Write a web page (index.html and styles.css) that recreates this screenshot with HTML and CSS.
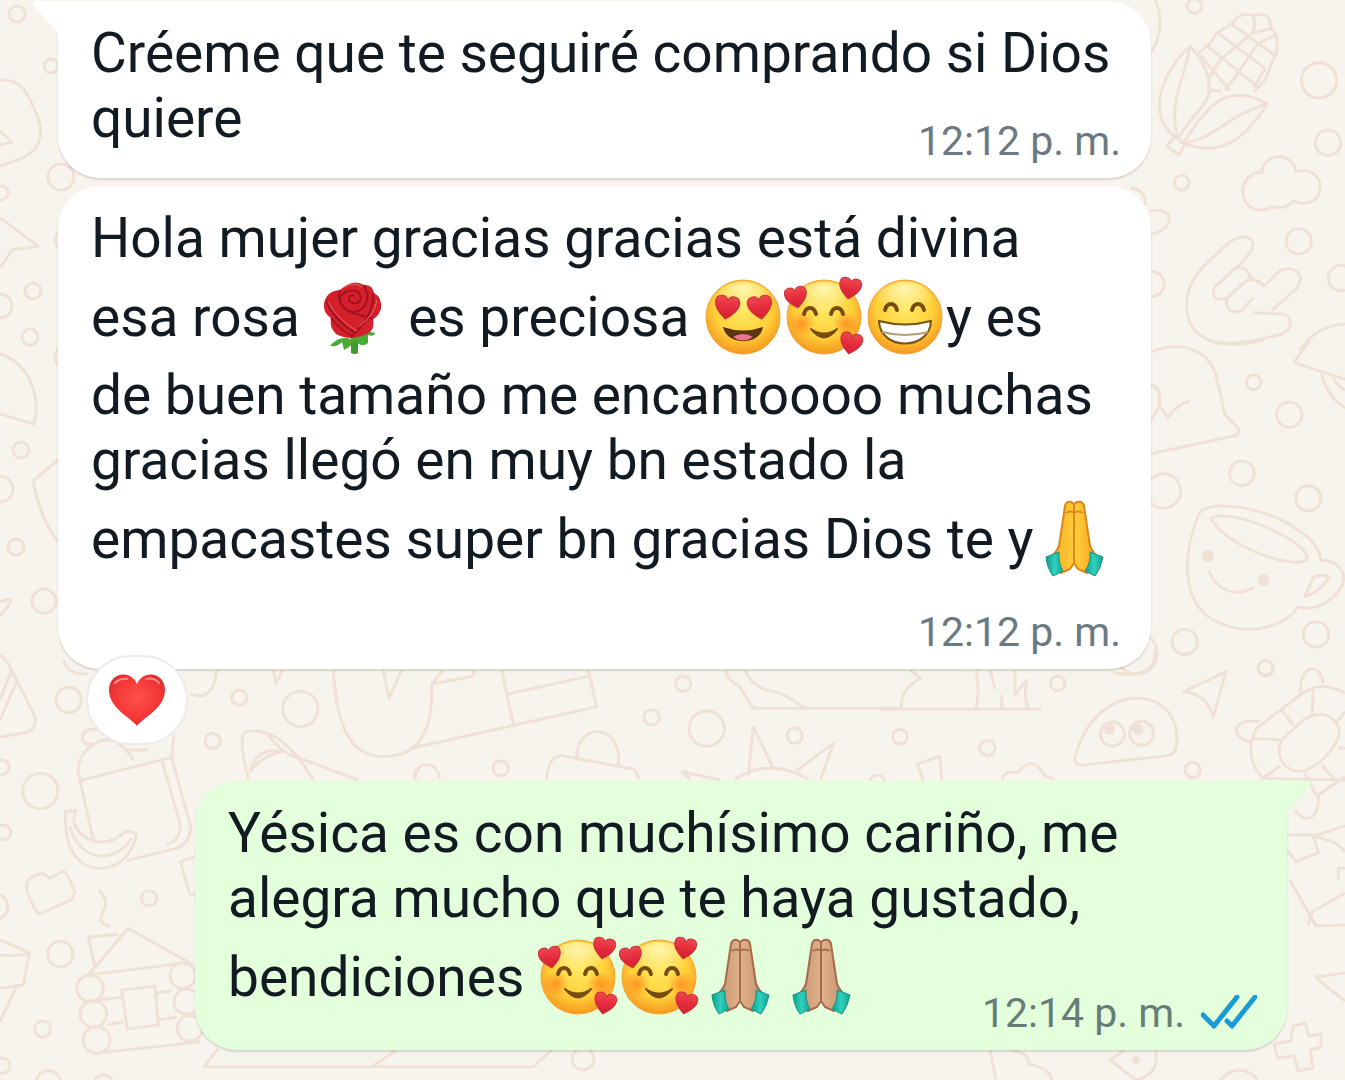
FILE: index.html
```html
<!DOCTYPE html>
<html lang="es">
<head>
<meta charset="utf-8">
<meta name="viewport" content="width=device-width, initial-scale=1">
<title>Chat</title>
<link rel="stylesheet" href="styles.css">
</head>
<body>
<svg class="wallpaper" viewBox="0 0 1345 1080" preserveAspectRatio="xMidYMin slice" aria-hidden="true">
  <!-- right edge, top: corn, cloud, hand -->
  <g transform="translate(1130 0) scale(.33333)">
    <path d="M75 0Q110 80 65 155"/>
    <path d="M180 138C70 245 60 370 145 415C180 350 240 310 237 270Q240 200 180 138ZM180 138C165 240 110 310 145 415M160 430C240 300 300 250 412 312C330 440 260 465 160 430C250 420 300 340 412 312M135 410L110 438L148 464L164 434Z"/>
    <path d="M205 160L240 130L262 98L305 72Q335 30 370 48Q420 30 424 85Q450 105 438 160L405 240L372 274M262 98L405 205M225 132L385 262M210 165L300 272M305 72L440 170M240 270L275 274M424 85L370 100M370 48Q380 80 365 100L270 180L237 235M438 105L385 130L330 210L285 272M405 205L372 262"/>
    <circle cx="194" cy="18" r="22"/><circle cx="567" cy="241" r="53"/><circle cx="594" cy="428" r="38"/><circle cx="155" cy="548" r="22"/><circle cx="506" cy="724" r="38"/><circle cx="633" cy="834" r="38"/><circle cx="64" cy="852" r="38"/>
    <path d="M396 516C400 455 490 455 498 516C540 500 575 530 570 568C565 610 520 618 490 602Q465 630 425 620C380 645 338 620 338 570Q345 520 396 516ZM60 632Q120 625 118 660Q110 695 60 703M0 565Q45 565 46 615"/>
    <path d="M320 805L360 758C390 715 340 695 300 725L220 800C160 860 150 960 210 1005C270 1050 350 1025 455 1003C490 990 490 945 455 942L370 938M425 932L500 865C530 820 490 795 450 812L402 858L360 832C350 790 310 800 300 820L255 860C240 890 260 905 290 895L345 845M290 895C285 930 310 945 335 930L372 892M402 858Q375 825 340 848M510 1050Q560 975 645 972"/>
  </g>
  <!-- right edge, middle: helmet, cup -->
  <g transform="translate(1130 340) scale(.33333)">
    <path d="M60 36C170 -5 245 40 262 120L284 222L325 265Q330 285 310 288L60 342M60 135Q95 140 88 200L60 245M88 195L114 232Q145 190 180 184M235 0Q300 25 400 0M540 0L492 68L645 118M575 104Q590 165 645 205M610 112Q620 140 645 150"/>
    <circle cx="371" cy="127" r="22"/><circle cx="478" cy="224" r="38"/><circle cx="336" cy="400" r="37"/><circle cx="535" cy="475" r="38"/><circle cx="100" cy="453" r="52"/><circle cx="164" cy="906" r="38"/><circle cx="558" cy="883" r="38"/><circle cx="407" cy="984" r="22"/><circle cx="20" cy="940" r="62"/>
    <path d="M205 525C220 480 370 495 470 548Q570 605 572 660C640 665 660 715 620 760Q570 815 505 802C450 870 340 890 250 840C150 780 160 640 205 525ZM242 535C300 500 530 600 532 655C510 695 290 625 242 535ZM237 692C255 750 320 775 370 742M525 770L550 712Q580 700 598 712Q570 755 525 770Z"/>
    <circle class="dot" cx="234" cy="647" r="18"/><circle class="dot" cx="400" cy="720" r="18"/>
  </g>
  <!-- right edge, lower: eyes, arrow, turtle -->
  <g transform="translate(880 650) scale(.33333)">
    <path d="M90 60L122 85Q55 120 65 178M0 178H485M288 60Q300 120 288 178M330 60L345 118M365 135V178M405 60V135L440 90Q430 140 445 178M700 68Q830 90 825 0M905 10Q935 15 945 0"/>
    <path d="M585 320C620 200 700 135 790 146C870 155 900 230 888 290Q885 315 860 317L605 346Q580 346 585 320ZM912 125L1038 65L1000 202Q980 130 912 125Z"/>
    <circle cx="697" cy="252" r="36"/><circle cx="785" cy="250" r="36"/><circle class="dot" cx="688" cy="238" r="17"/><circle class="dot" cx="773" cy="238" r="17"/>
    <circle cx="533" cy="100" r="22"/><circle cx="60" cy="260" r="22"/><circle cx="322" cy="294" r="23"/><circle cx="938" cy="360" r="23"/><circle cx="1157" cy="55" r="23"/>
    <path d="M130 390L112 342L180 318L185 390M365 388Q375 360 415 368Q455 310 495 378L525 388"/>
    <path d="M1395 130C1340 100 1300 105 1260 135L1130 235C1100 290 1110 340 1148 385L1200 348M1148 385L1395 390M1205 270C1180 320 1220 375 1275 362C1330 340 1390 270 1375 230C1350 180 1300 190 1270 210ZM1205 180L1240 225M1300 115L1297 192M1115 265L1200 270M1370 215L1395 185M1325 345L1365 390M1375 295H1395M1262 125C1255 50 1320 30 1330 100M1115 275C1050 270 1050 200 1140 215M1245 480C1280 530 1320 500 1315 435L1395 380M1310 440L1275 370"/>
    <path d="M1220 555H1310L1395 528M1220 600L1248 635L1315 608L1300 560Q1370 570 1395 605M1395 655H1375V690"/>
  </g>
  <path d="M1345 893L1312 912L1308 925M1345 925L1316 926L1290 880M1315 977L1345 973M1315 977L1345 1001"/>
  <path d="M1293 1026L1305 1023L1309 1036L1321 1034L1321 1047L1310 1050L1313 1068L1298 1071L1294 1056L1278 1058L1274 1044L1291 1041Z"/>
  <path d="M990 1050L996 1080M1010 1050Q1030 1052 1028 1064Q1050 1068 1052 1080M1125 1050L1110 1060L1136 1080Q1160 1075 1156 1050M1220 1080Q1240 1060 1258 1080"/>
  <circle class="dot" cx="1136" cy="1060" r="4"/>
  <!-- strip between messages -->
  <g transform="translate(400 660) scale(.33333)">
    <path d="M95 72L130 30M95 72L205 52Q225 50 222 30M95 72Q100 220 35 265M0 285L35 265L590 140L565 30M305 30L340 195M325 102L568 48M440 358Q445 285 485 287L695 326Q715 335 716 358M530 295C530 180 670 190 655 315M975 30Q990 70 1015 75L1060 145H1500M1035 30Q1060 90 1130 97Q1170 110 1210 143M1045 345L1060 200L1120 325M1188 333L1300 250L1262 358M1005 358Q1110 290 1225 358M845 335L960 360M845 335L870 358M42 355C45 300 115 300 118 355"/>
    <circle cx="849" cy="71" r="23"/><circle cx="755" cy="172" r="23"/><circle cx="920" cy="206" r="53"/><circle cx="1184" cy="227" r="23"/><circle cx="302" cy="325" r="23"/><circle cx="1432" cy="368" r="23"/>
  </g>
  <!-- left, lower: jug, banana, cabin -->
  <g transform="translate(0 660) scale(.33333)">
    <path d="M35 30L105 170Q110 205 85 215L0 232M35 30L0 120M50 65L0 180M190 0Q210 50 265 40M570 100Q640 130 650 30M820 30L828 72L848 30M1150 30L1167 115L1205 30M1000 30C1010 200 1050 290 1150 290Q1240 285 1260 240"/>
    <circle cx="206" cy="120" r="38"/><circle cx="121" cy="393" r="53"/><circle cx="718" cy="113" r="23"/><circle cx="901" cy="147" r="53"/><circle cx="638" cy="243" r="23"/><circle cx="6" cy="322" r="22"/><circle cx="10" cy="517" r="22"/><circle cx="-15" cy="740" r="38"/><circle cx="447" cy="715" r="23"/><circle cx="181" cy="882" r="38"/><circle cx="128" cy="1107" r="24"/><circle cx="7" cy="1217" r="23"/><circle cx="145" cy="1270" r="38"/><circle cx="310" cy="1275" r="30"/>
    <path d="M280 540L235 340Q230 285 285 250Q350 215 400 300M285 250Q245 260 247 230Q255 200 300 210M240 362L515 292L522 225M485 300L540 490Q545 540 500 555M515 292L572 500Q570 550 530 565L380 602M380 270L445 270"/>
    <path d="M195 455L228 452L220 485C250 560 330 560 375 515Q410 510 408 535C380 620 310 640 255 615C190 570 200 510 195 455ZM210 500C235 600 340 620 395 535M80 670Q85 650 130 640L150 655L190 633Q205 640 225 700L215 718L120 762Q100 750 80 690ZM295 690Q330 720 310 755T330 800M585 590L542 605L568 700L585 705"/>
    <path d="M0 840L88 878L70 975L0 985M0 885Q50 890 88 880M50 980L0 1085M265 945L385 805L580 915M285 920L265 832L355 822M265 945L530 912M300 1020L370 1010M320 1095L370 1085M465 1000L515 992M475 1080L530 1072M290 1180L600 1145M365 990L465 978L475 1095L382 1107Z"/>
    <circle cx="270" cy="985" r="40"/><circle cx="280" cy="1062" r="40"/><circle cx="290" cy="1140" r="40"/><circle cx="548" cy="947" r="38"/><circle cx="560" cy="1025" r="38"/><circle cx="570" cy="1105" r="38"/>
    <path d="M745 358Q710 220 740 215C800 205 870 240 940 360M750 335Q770 260 845 275Q780 290 750 335M800 220Q850 285 900 295L1075 360M1245 360Q1245 335 1260 325M655 1165L612 1220H1600L1660 1165M1115 1220L1190 1170"/>
  </g>
  <circle cx="583" cy="1059" r="11"/>
  <!-- left edge, top -->
  <g>
    <circle cx="17" cy="14" r="8"/><circle cx="51" cy="66" r="7"/><circle cx="61" cy="177" r="13"/><circle cx="1" cy="193" r="7"/><circle cx="33" cy="291" r="8"/><circle cx="0" cy="306" r="12"/><circle cx="30" cy="337" r="8"/><circle cx="21" cy="450" r="8"/><circle cx="0" cy="489" r="13"/><circle cx="16" cy="547" r="8"/><circle cx="44" cy="601" r="12"/><circle cx="66" cy="240" r="11"/><circle cx="66" cy="357" r="11"/>
    <path d="M0 80C25 78 30 100 38 118C46 140 35 152 22 158L0 166M0 131L12 142L0 145M0 218L38 246L12 250L0 268M0 354C25 362 42 390 34 424L0 414M60 458L33 481Q40 520 60 544M0 602Q16 595 8 606L0 616M0 655Q8 660 14 676"/>
  </g>
</svg>

<!-- shared emoji artwork -->
<svg class="defs" aria-hidden="true">
  <defs>
    <radialGradient id="skin" cx=".5" cy=".4" r=".62"><stop offset="0" stop-color="#ffe862"/><stop offset=".6" stop-color="#ffd13a"/><stop offset="1" stop-color="#f5921c"/></radialGradient>
    <radialGradient id="shine" cx=".5" cy=".2" r=".6"><stop offset="0" stop-color="#fff6ae"/><stop offset="1" stop-color="#fff6ae" stop-opacity="0"/></radialGradient>
    <radialGradient id="blush"><stop offset="0" stop-color="#ff7a1a" stop-opacity=".7"/><stop offset="1" stop-color="#ff7a1a" stop-opacity="0"/></radialGradient>
    <linearGradient id="red" x1="0" y1="0" x2="0" y2="1"><stop offset="0" stop-color="#ef4a50"/><stop offset=".5" stop-color="#e52c3c"/><stop offset="1" stop-color="#d2202f"/></linearGradient>
    <radialGradient id="love" cx=".5" cy=".45" r=".6"><stop offset="0" stop-color="#ff5149"/><stop offset=".7" stop-color="#f23637"/><stop offset="1" stop-color="#d52a2c"/></radialGradient>
    <linearGradient id="hand" x1="0" x2="1"><stop offset="0" stop-color="#f5a81f"/><stop offset=".5" stop-color="#ffce3d"/><stop offset="1" stop-color="#f3a01c"/></linearGradient>
    <linearGradient id="tan" x1="0" x2="1"><stop offset="0" stop-color="#c1906a"/><stop offset=".5" stop-color="#e0b38d"/><stop offset="1" stop-color="#c28e69"/></linearGradient>
    <linearGradient id="cuff" x1="0" x2="1"><stop offset="0" stop-color="#0e9e90"/><stop offset=".5" stop-color="#2fd0bd"/><stop offset="1" stop-color="#14a595"/></linearGradient>
    <path id="heart" d="M0 11C-4 8-11 3-11-4C-11-11-2-12 0-6C2-12 11-11 11-4C11 3 4 8 0 11Z" stroke="#c9303a" stroke-linejoin="round"/>
    <g id="face"><circle cx="40" cy="46" r="37" fill="url(#skin)" stroke="#f5a234"/><ellipse cx="40" cy="30" rx="28" ry="19" fill="url(#shine)"/></g>
    <g id="arcs" fill="none" stroke="#754c12" stroke-width="4" stroke-linecap="round"><path d="M20 43C22 35 30 35 32 43M47 43C49 35 57 35 59 43"/></g>
    <symbol id="adore" viewBox="0 0 81 92"><use href="#face"/><use href="#heart" fill="url(#red)" transform="translate(24 36) scale(1.1) rotate(8)"/><use href="#heart" fill="url(#red)" transform="translate(57 36) scale(1.1) rotate(-8)"/><path d="M20 56Q40 63 60 56C57 75 24 75 20 56Z" fill="#5b3412"/><path d="M30 66Q40 60 50 66Q40 73 30 66Z" fill="#f0758b"/></symbol>
    <symbol id="loved" viewBox="0 0 81 92"><use href="#face"/><circle cx="18" cy="53" r="13" fill="url(#blush)"/><circle cx="62" cy="53" r="13" fill="url(#blush)"/><use href="#arcs"/><path d="M27 58Q40 67 53 58Q40 75 27 58Z" fill="#754c12" stroke="#754c12" stroke-width="2" stroke-linejoin="round"/><use href="#heart" fill="url(#red)" transform="translate(12 26) rotate(-10)"/><use href="#heart" fill="url(#red)" transform="translate(66 17) rotate(10)"/><use href="#heart" fill="url(#red)" transform="translate(67 72) rotate(12)"/></symbol>
    <symbol id="grin" viewBox="0 0 81 92"><use href="#face"/><use href="#arcs" transform="translate(0 -4)"/><path d="M14 50Q40 57 66 50C65 80 15 80 14 50Z" fill="#fff" stroke="#7a5214" stroke-width="2"/><path d="M17 61Q40 67 63 61" fill="none" stroke="#b59c78" stroke-width="2"/></symbol>
    <g id="palms"><path d="M31 13Q32 8 37 9L40 11L43 9Q49 8 50 13L56 53Q59 60 65 65L53 80L44 76L40 70L36 76L27 80L16 65Q22 60 25 53Z"/><path d="M40 12V69M32 20Q37 17 40 20Q44 17 49 20" fill="none"/></g>
    <g id="cuffs" fill="url(#cuff)" stroke="#159184" stroke-width="1"><path d="M12 64L25 59Q24 70 29 78L19 83Q13 75 12 64Z"/><path d="M69 64L56 59Q57 70 51 78L61 83Q67 75 69 64Z"/></g>
    <symbol id="pray" viewBox="0 0 81 92"><use href="#palms" fill="url(#hand)" stroke="#dc8617" stroke-width="2"/><use href="#cuffs"/></symbol>
    <symbol id="pray-tan" viewBox="0 0 81 92"><use href="#palms" fill="url(#tan)" stroke="#a86a4a" stroke-width="2"/><use href="#cuffs"/></symbol>
    <symbol id="rose" viewBox="0 0 81 92">
      <path d="M37 64H44V82Q41 84 37 82Z" fill="#3f9a2f"/><path d="M37 68Q25 64 16 75Q24 76 28 71L30 79Q38 76 40 68Q47 78 54 72V64Q60 66 61 62Q47 58 37 68Z" fill="#4cab35"/>
      <path d="M10 33Q12 20 26 19Q39 7 50 14Q58 13 60 22Q68 26 67 38Q64 46 59 48Q62 62 47 65Q35 70 22 63Q15 56 17 47Q9 42 10 33Z" fill="#d3202b"/>
      <path d="M26 19Q21 32 36 41L59 48M50 14Q57 28 49 37Q40 45 30 37Q21 26 32 21Q46 16 47 28Q43 36 35 30Q34 23 41 25M12 30Q21 50 41 62M59 22Q61 44 37 66M17 47Q27 60 37 64" fill="none" stroke="#a3131f" stroke-width="2"/>
      <path d="M14 31Q23 48 43 60M63 29Q61 44 45 55M29 17Q40 10 48 16" fill="none" stroke="#f0646a" stroke-width="1"/>
    </symbol>
  </defs>
</svg>

<main class="chat">
  <article class="bubble bubble-in">
    <svg class="tail" viewBox="0 0 30 36" aria-hidden="true"><path d="M4 0H30V36L3 6Q-1 0 4 0Z"/></svg>
    <p class="text">Créeme que te seguiré comprando si Dios<br>quiere</p>
    <div class="meta"><time datetime="12:12">12:12 p. m.</time></div>
  </article>

  <article class="bubble bubble-in">
    <p class="text">Hola mujer gracias gracias está divina<br>esa rosa <svg class="emoji" role="img" aria-label="rosa"><use href="#rose"/></svg> es preciosa <svg class="emoji" role="img" aria-label="ojos de corazón"><use href="#adore"/></svg><svg class="emoji" role="img" aria-label="cara con corazones"><use href="#loved"/></svg><svg class="emoji" role="img" aria-label="sonrisa"><use href="#grin"/></svg>y es<br>de buen tamaño me encantoooo muchas<br>gracias llegó en muy bn estado la<br>empacastes super bn gracias Dios te y<svg class="emoji" role="img" aria-label="manos juntas"><use href="#pray"/></svg></p>
    <div class="meta meta-below"><time datetime="12:12">12:12 p. m.</time></div>
    <button class="reaction" type="button" aria-label="Reacción: corazón"><svg viewBox="0 0 58 52" aria-hidden="true"><path d="M29 52C22 43 1 34 1 16C1-2 23-5 29 10C35-5 57-2 57 16C57 34 36 43 29 52Z" fill="url(#love)"/><path d="M7 9Q12 4 19 5M38 5Q46 3 51 9" fill="none" stroke="#ff8f88" stroke-width="2" stroke-linecap="round"/></svg></button>
  </article>

  <article class="bubble bubble-out">
    <svg class="tail" viewBox="0 0 30 36" aria-hidden="true"><path d="M0 0H26Q31 0 27 6L6 30V36H0Z"/></svg>
    <p class="text">Yésica es con muchísimo cariño, me<br>alegra mucho que te haya gustado,<br>bendiciones <svg class="emoji" role="img" aria-label="cara con corazones"><use href="#loved"/></svg><svg class="emoji" role="img" aria-label="cara con corazones"><use href="#loved"/></svg><svg class="emoji" role="img" aria-label="manos juntas"><use href="#pray-tan"/></svg><svg class="emoji" role="img" aria-label="manos juntas"><use href="#pray-tan"/></svg></p>
    <div class="meta"><time datetime="12:14">12:14 p. m.</time><svg class="ticks" viewBox="0 0 56 36" role="img" aria-label="Leído"><path d="M2 20L13 31L36 2M26 26L31 31L54 2"/></svg></div>
  </article>
</main>
</body>
</html>
```
FILE: styles.css
```css
* { box-sizing: border-box; }

body {
  position: relative;
  margin: 0;
  min-height: 100vh;
  overflow-x: hidden;
  background: #f7f4ee;
  color: #111b21;
  font-family: Roboto, "Liberation Sans", sans-serif;
}

.wallpaper {
  position: absolute;
  inset: 0;
  width: 100%;
  height: 100%;
  fill: none;
  stroke: #efe1d5;
  stroke-width: 3;
  stroke-linejoin: round;
}
.wallpaper g[transform] { stroke-width: 9; }
.wallpaper .dot { fill: #efe1d5; stroke: none; }

.defs {
  position: absolute;
  width: 0;
  height: 0;
}

.chat {
  position: relative;
  display: flex;
  flex-direction: column;
  gap: 8px;
  padding: 1px 58px 30px;
}

.bubble {
  position: relative;
  padding: 20px 30px 13px 33px;
  border-radius: 42px;
  box-shadow: 0 2px 2px rgba(60, 50, 40, .16);
}
.bubble-in {
  margin-right: 136px;
  background: #fff;
}
.bubble-out {
  margin: 104px 0 0 137px;
  border-top-right-radius: 0;
  background: #e4ffdb;
}
.bubble-in:first-child { border-top-left-radius: 0; }

.tail {
  position: absolute;
  top: 0;
  width: 30px;
  height: 36px;
}
.bubble-in .tail {
  left: -26px;
  fill: #fff;
}
.bubble-out .tail {
  right: -25px;
  fill: #e4ffdb;
}

.text {
  margin: 0;
  font-size: 55px;
  line-height: 65px;
}

.emoji {
  width: 81px;
  height: 92px;
  vertical-align: -27px;
}

.meta {
  display: flex;
  justify-content: flex-end;
  align-items: center;
  gap: 16px;
  margin-top: -34px;
  color: #6b7980;
  font-size: 41px;
  line-height: 48px;
}
.meta-below { margin-top: 23px; }
.bubble-out .meta { color: #667d78; }

.ticks {
  width: 56px;
  height: 36px;
  fill: none;
  stroke: #1a9bd3;
  stroke-width: 5;
  stroke-linejoin: round;
  stroke-linecap: round;
}

.reaction {
  position: absolute;
  left: 28px;
  bottom: -76px;
  display: flex;
  align-items: center;
  justify-content: center;
  width: 102px;
  height: 90px;
  padding: 0;
  border: 2px solid #eeece8;
  border-radius: 45px;
  background: #fff;
}
.reaction svg {
  width: 58px;
  height: 52px;
}
```
